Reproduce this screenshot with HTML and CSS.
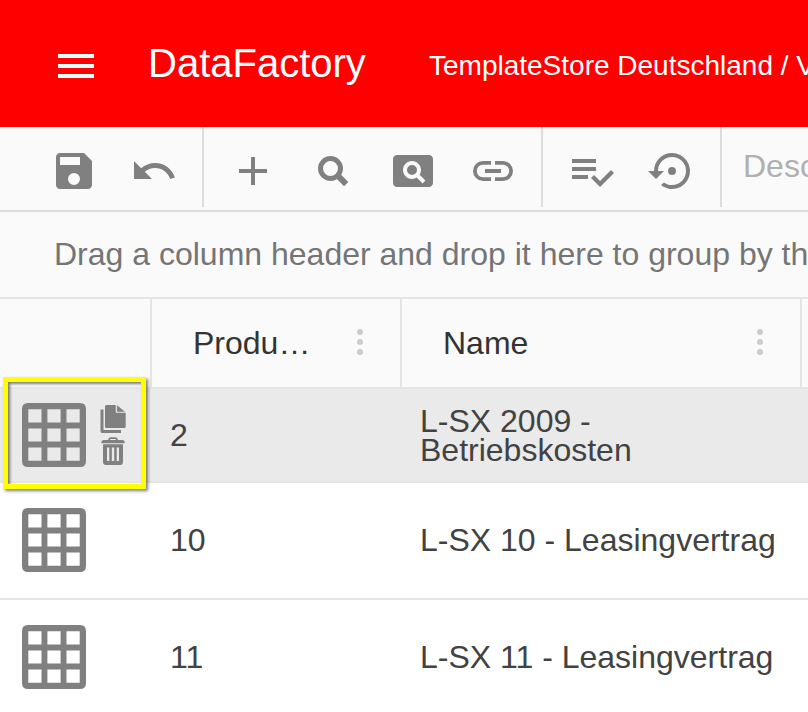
FILE: index.html
```html
<!DOCTYPE html>
<html lang="de">
<head>
<meta charset="utf-8">
<title>DataFactory</title>
<link rel="stylesheet" href="styles.css">
</head>
<body>
<svg class="defs" width="0" height="0">
  <symbol id="grid" viewBox="0 0 64 64">
    <path fill-rule="evenodd" d="M6 0H58Q64 0 64 6V58Q64 64 58 64H6Q0 64 0 58V6Q0 0 6 0ZM6.300 6.300V19.500H19.500V6.300ZM25.400 6.300V19.500H38.600V6.300ZM44.500 6.300V19.500H57.700V6.300ZM6.300 25.400V38.600H19.500V25.400ZM25.400 25.400V38.600H38.600V25.400ZM44.500 25.400V38.600H57.700V25.400ZM6.300 44.500V57.700H19.500V44.500ZM25.400 44.500V57.700H38.600V44.500ZM44.500 44.500V57.700H57.700V44.500Z"/>
  </symbol>
</svg>
<header class="appbar">
  <div class="menu"><i></i><i></i><i></i></div>
  <h1 class="brand">DataFactory</h1>
  <div class="path">TemplateStore Deutschland / Verträge</div>
</header>
<nav class="toolbar">
  <div class="tools first">
    <svg viewBox="0 0 24 24"><path d="M17 3H5c-1.100 0-2 .9-2 2v14c0 1.100.9 2 2 2h14c1.100 0 2-.9 2-2V7zM12 19a3 3 0 1 1 0-6 3 3 0 0 1 0 6zM15 9H5V5h10z"/></svg>
    <svg viewBox="0 0 24 24"><path d="M12.500 8c-2.650 0-5.050.99-6.900 2.600L2 7v9h9l-3.620-3.620c1.390-1.160 3.160-1.880 5.120-1.880 3.540 0 6.550 2.310 7.600 5.500l2.370-.78C21.080 11.030 17.150 8 12.500 8z"/></svg>
  </div>
  <div class="tools second">
    <svg viewBox="0 0 24 24"><path d="M19 13h-6v6h-2v-6H5v-2h6V5h2v6h6z"/></svg>
    <svg viewBox="0 0 24 24"><g fill="none" stroke="#808080"><circle cx="10.750" cy="10.750" r="5" stroke-width="2.500"/><path d="M14.200 14.200 18.600 18.600" stroke-width="3"/></g></svg>
    <svg viewBox="0 0 24 24"><path d="M11.500 9a2.500 2.500 0 1 0 0 5 2.500 2.500 0 0 0 0-5zM20 4H4c-1.100 0-2 .9-2 2v12c0 1.100.9 2 2 2h16c1.100 0 2-.9 2-2V6c0-1.100-.9-2-2-2zm-3.210 14.210-2.910-2.910c-.69.44-1.510.7-2.390.7C9.010 16 7 13.990 7 11.500S9.010 7 11.500 7 16 9.010 16 11.500c0 .88-.26 1.690-.7 2.390l2.910 2.900z"/></svg>
    <svg viewBox="0 0 24 24"><path d="M3.900 12c0-1.710 1.390-3.100 3.100-3.100h4V7H7a5 5 0 0 0 0 10h4v-1.900H7c-1.710 0-3.100-1.390-3.100-3.100zM8 13h8v-2H8zm9-6h-4v1.900h4a3.100 3.100 0 0 1 0 6.200h-4V17h4a5 5 0 0 0 0-10z"/></svg>
  </div>
  <div class="tools third">
    <svg viewBox="0 0 24 24"><path d="M14 10H2v2h12zM14 6H2v2h12zM2 16h8v-2H2zM21.500 11.500 23 13l-6.990 7-4.510-4.500L13 14l3.010 3z"/></svg>
    <svg viewBox="0 0 24 24"><path d="M14 12a2 2 0 1 0-4 0 2 2 0 0 0 4 0zm-2-9a9 9 0 0 0-9 9H0l4 4 4-4H5a7 7 0 1 1 7 7c-1.510 0-2.910-.49-4.060-1.300l-1.420 1.440A9 9 0 1 0 12 3z"/></svg>
  </div>
  <div class="search">Description</div>
</nav>
<div class="grouping">Drag a column header and drop it here to group by that column</div>
<main class="grid">
  <div class="row head">
    <div class="cell c1"></div>
    <div class="cell c2"><span>Produ…</span><div class="dots"><i></i><i></i><i></i></div></div>
    <div class="cell c3"><span>Name</span><div class="dots"><i></i><i></i><i></i></div></div>
  </div>
  <div class="row selected">
    <div class="cell c1">
      <svg class="table"><use href="#grid"/></svg>
      <div class="actions">
        <svg viewBox="0 0 26 28"><path d="M6.500 0H15.800V7.800H25.700V21.500Q25.700 23 24.200 23H6.500Q5 23 5 21.500V1.500Q5 0 6.500 0ZM17 .3 25 6.800H17ZM.5 4.500H3.500V25H21V28H2Q.5 28 .5 26.300Z"/></svg>
        <svg viewBox="0 0 26 28"><path fill-rule="evenodd" d="M1.300 6.300Q1.300 3 4 3H8L9 1Q9.500 .2 10.500 .2H15.500Q16.500 .2 17 1L18 3H22Q24.800 3 24.800 6.300ZM10 3H16L15.400 2H10.600ZM3 7.300H23V25Q23 28 20 28H6Q3 28 3 25ZM7 10.500V24H9.300V10.500ZM11.800 10.500V24H14.200V10.500ZM16.700 10.500V24H19V10.500Z"/></svg>
      </div>
      <div class="highlight"></div>
    </div>
    <div class="cell c2">2</div>
    <div class="cell c3"><span>L-SX 2009 -<br>Betriebskosten</span></div>
  </div>
  <div class="row">
    <div class="cell c1"><svg class="table"><use href="#grid"/></svg></div>
    <div class="cell c2">10</div>
    <div class="cell c3">L-SX 10 - Leasingvertrag</div>
  </div>
  <div class="row">
    <div class="cell c1"><svg class="table"><use href="#grid"/></svg></div>
    <div class="cell c2">11</div>
    <div class="cell c3">L-SX 11 - Leasingvertrag</div>
  </div>
</main>
</body>
</html>
```
FILE: styles.css
```css
* { box-sizing: border-box; }
body {
  margin: 0;
  width: 808px;
  height: 712px;
  overflow: hidden;
  background: #fff;
  color: #424242;
  font: 32px/29px "Liberation Sans", Arial, sans-serif;
}
svg { display: block; flex: none; fill: #808080; }
.defs { position: absolute; }

.appbar {
  display: flex;
  align-items: center;
  height: 127px;
  padding: 0 0 0 58px;
  overflow: hidden;
  background: #f00;
  color: #fff;
  white-space: nowrap;
}
.menu { display: grid; flex: none; gap: 6px; width: 36px; margin: 5px 54px 0 0; }
.menu i { height: 4px; background: #e0ffff; }
.brand { flex: none; width: 281px; margin: 0; padding-bottom: 2px; font-size: 40px; font-weight: 400; line-height: 46px; }
.path { flex: none; font-size: 28px; line-height: 32px; padding-top: 4px; }

.toolbar {
  display: flex;
  height: 85px;
  background: #fafafa;
  border-bottom: 2px solid #dcdcdc;
}
.tools {
  display: flex;
  flex: none;
  gap: 32px;
  height: 80px;
  padding-top: 20px;
  border-right: 2px solid #dcdcdc;
}
.tools svg { width: 48px; height: 48px; }
.first { width: 204px; padding-left: 50px; }
.second { width: 339px; padding-left: 25px; }
.third { width: 179px; padding-left: 25px; }
.search {
  flex: 1;
  min-width: 0;
  overflow: hidden;
  padding: 25px 0 0 21px;
  color: #b0b0b0;
}

.grouping {
  height: 87px;
  padding: 28px 0 0 54px;
  overflow: hidden;
  background: #fafafa;
  border-bottom: 2px solid #e5e5e5;
  color: #757575;
  white-space: nowrap;
}

.row {
  display: flex;
  height: 117px;
  border-bottom: 2px solid #e5e5e5;
}
.cell { display: flex; flex: none; align-items: center; white-space: nowrap; }
.c1 { width: 152px; padding: 0 0 1px 22px; position: relative; }
.c2 { width: 250px; padding-left: 18px; }
.c3 { width: 400px; padding-left: 18px; }
.head { height: 90px; background: #fafafa; color: #333; }
.head .cell { border-right: 2px solid #e5e5e5; }
.head .c2, .head .c3 { justify-content: space-between; padding: 0 37px 0 41px; }
.dots { display: grid; gap: 4px; margin-bottom: 2px; }
.dots i { width: 6px; height: 6px; border-radius: 50%; background: #ccc; }
.selected { height: 94px; background: #eaeaea; }
.selected .c1 { padding-bottom: 0; }
.selected .c3 { padding-top: 1px; }
.table { width: 64px; height: 64px; }
.actions { display: grid; gap: 4px; margin-left: 14px; }
.actions svg { width: 26px; height: 28px; }
.highlight {
  position: absolute;
  left: 3px;
  top: -12px;
  width: 143px;
  height: 112px;
  border: 5px solid #ff0;
  box-shadow: 2px 2px 3px rgba(0, 0, 0, .5), inset 2px 2px 3px rgba(0, 0, 0, .5);
}
```
